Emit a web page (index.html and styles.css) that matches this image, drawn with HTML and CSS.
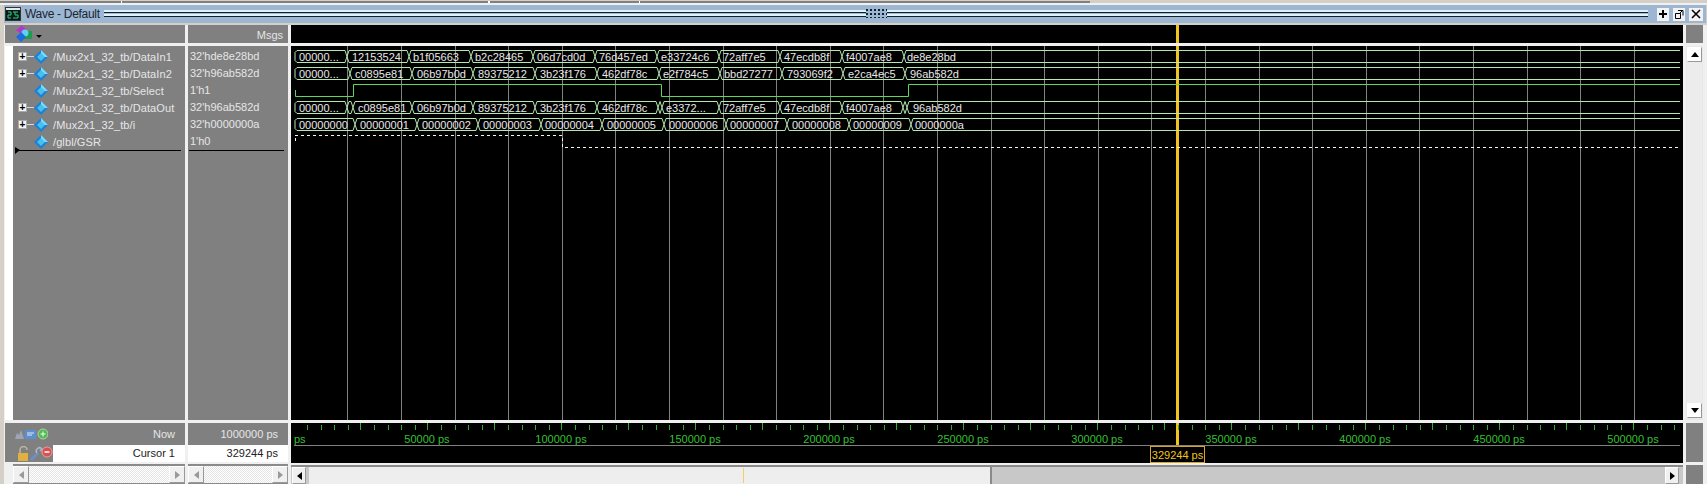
FILE: index.html
```html
<!DOCTYPE html>
<html lang="en">
<head>
    <meta name="viewport" content="width=device-width, initial-scale=1">
    <title>Wave - Default</title>
    <link rel="stylesheet" href="styles.css">
</head>
<body>
    <div class="topstrip"></div>
    <div class="window">
        <div class="titlebar">
            <svg class="appicon" width="16" height="14" viewBox="0 0 16 14">
                <rect x="0.5" y="0.5" width="15" height="13" fill="#0a1a14" stroke="#333"/>
                <rect x="1" y="1" width="14" height="2" fill="#e8e8e8"/>
                <path d="M3 5h3v3H3v3h3M8 5h5M10 5v3h3v3H8" fill="none" stroke="#2fd08a"/>
            </svg>
            <span class="wintitle">Wave - Default</span>
            <div class="grip">
                <div class="gripmark"></div>
            </div>
            <button class="winbtn">
                <svg width="10" height="10" viewBox="0 0 10 10"><path d="M5 1v8M1 5h8" stroke="#000" stroke-width="2"/></svg>
            </button>
            <button class="winbtn">
                <svg width="10" height="10" viewBox="0 0 10 10"><path d="M1.500 4.500h5v5h-5zM4 1.500h5v5M5 5l4-4" fill="none" stroke="#000"/></svg>
            </button>
            <button class="winbtn winclose">
                <svg width="10" height="10" viewBox="0 0 10 10"><path d="M1 1l8 8M9 1l-8 8" stroke="#000" stroke-width="1.600"/></svg>
            </button>
        </div>

        <div class="panes">
            <!-- signal names -->
            <div class="col names">
                <div class="head namehead">
                    <svg width="18" height="18" viewBox="0 0 18 18">
                        <path d="M7 .7l4.500 4.500-5 3-5-3z" fill="#a040c8" stroke="#d030c0"/>
                        <rect x="9" y="6" width="8" height="8" fill="#1c9c50"/>
                        <circle cx="10" cy="8" r="3.500" fill="#5fd0f0"/>
                        <path d="M6 7l5 5-5 5-5-5z" fill="#1c6ce0"/>
                    </svg>
                    <span class="arrow"></span>
                </div>
                <div class="body namebody">
                    <div class="gutter"></div>
                    <div class="list">
                        <div class="row"><span class="plus">+</span><i class="wire"></i><svg class="dia" width="14" height="14" viewBox="0 0 14 14"><use href="#diamond"/></svg><span class="sig">/Mux2x1_32_tb/DataIn1</span></div>
                        <div class="row"><span class="plus">+</span><i class="wire"></i><svg class="dia" width="14" height="14" viewBox="0 0 14 14"><use href="#diamond"/></svg><span class="sig">/Mux2x1_32_tb/DataIn2</span></div>
                        <div class="row"><span class="noplus"></span><svg class="dia" width="14" height="14" viewBox="0 0 14 14"><use href="#diamond"/></svg><span class="sig">/Mux2x1_32_tb/Select</span></div>
                        <div class="row"><span class="plus">+</span><i class="wire"></i><svg class="dia" width="14" height="14" viewBox="0 0 14 14"><use href="#diamond"/></svg><span class="sig">/Mux2x1_32_tb/DataOut</span></div>
                        <div class="row"><span class="plus">+</span><i class="wire"></i><svg class="dia" width="14" height="14" viewBox="0 0 14 14"><use href="#diamond"/></svg><span class="sig">/Mux2x1_32_tb/i</span></div>
                        <div class="row"><span class="noplus"></span><svg class="dia" width="14" height="14" viewBox="0 0 14 14"><use href="#diamond"/></svg><span class="sig">/glbl/GSR</span></div>
                        <div class="rule namerule"></div>
                    </div>
                </div>
                <div class="now nowname">
                    <span class="tools">
                        <svg width="34" height="12" viewBox="0 0 34 12">
                            <path d="M1 11l2-6 2 2 2-5 3 9z" fill="#9aa6b8"/>
                            <rect x="11" y="2" width="11" height="9" fill="#5d8fd0"/><path d="M13 5h7M13 7h5" stroke="#dfe8f4"/>
                            <circle cx="29" cy="6" r="5" fill="#58b858" stroke="#a8d8a0"/><path d="M26.500 6h5M29 3.500v5" stroke="#e8ffe8"/>
                        </svg>
                    </span>
                    <span class="nowlabel">Now</span>
                </div>
                <div class="cursorrow">
                    <span class="tools cursortools">
                        <svg width="36" height="15" viewBox="0 0 36 15">
                            <path d="M3 7V4a3.500 3.500 0 0 1 7 0" fill="none" stroke="#b8b8a0" stroke-width="1.500"/>
                            <rect x="1" y="7" width="10" height="8" fill="#e0b040"/>
                            <path d="M14 14l7-7" stroke="#6a90c8" stroke-width="2.500"/><path d="M20 7a3 3 0 0 1 5-4l-2 2" fill="none" stroke="#a8b8d0" stroke-width="1.500"/>
                            <circle cx="30" cy="6" r="5" fill="#d85050" stroke="#e8a0a0"/><path d="M27.500 6h5" stroke="#fff" stroke-width="1.500"/>
                        </svg>
                    </span>
                    <span class="cursorlabel">Cursor 1</span>
                </div>
                <div class="hbar">
                    <span class="sbtn"><i class="tri left pale"></i></span>
                    <span class="thumb"></span>
                    <span class="sbtn"><i class="tri right pale"></i></span>
                </div>
            </div>

            <!-- values -->
            <div class="col values">
                <div class="head valhead">Msgs</div>
                <div class="body valbody">
                    <div class="val">32'hde8e28bd</div>
                    <div class="val">32'h96ab582d</div>
                    <div class="val">1'h1</div>
                    <div class="val">32'h96ab582d</div>
                    <div class="val">32'h0000000a</div>
                    <div class="val">1'h0</div>
                    <div class="rule valrule"></div>
                </div>
                <div class="now nowval">1000000 ps</div>
                <div class="cursorval">329244 ps</div>
                <div class="hbar valbar">
                    <span class="sbtn"><i class="tri left pale"></i></span>
                    <span class="thumb"></span>
                    <span class="sbtn"><i class="tri right pale"></i></span>
                </div>
            </div>

            <!-- waveform -->
            <div class="col wave">
                <div class="head wavehead"><span class="cursorline"></span></div>
                <div class="body wavebody">
                    <span class="cursorline"></span>
                    <svg class="plot" width="1392" height="374" viewBox="291 46 1392 374">
                        <defs>
                            <pattern id="grid" x="347" y="46" width="268" height="374" patternUnits="userSpaceOnUse">
                                <path d="M.5 0v374M54.500 0v374M108.500 0v374M161.500 0v374M215.500 0v374" stroke="#808080"/>
                            </pattern>
                        </defs>
                        <rect x="347" y="46" width="1336" height="374" fill="url(#grid)"/>

                        <g class="bus">
                            <path d="M295 52.500l2-2H345l2 6 2-6H407l2 6 2-6H469l2 6 2-6H531l2 6 2-6H593l2 6 2-6H655l2 6 2-6H717l2 6 2-6H778l2 6 2-6H840l2 6 2-6H902l2 6 2-6H1680M295 52.500v8l2 2H345l2-6 2 6H407l2-6 2 6H469l2-6 2 6H531l2-6 2 6H593l2-6 2 6H655l2-6 2 6H717l2-6 2 6H778l2-6 2 6H840l2-6 2 6H902l2-6 2 6H1680"/>
                            <path d="M295 69.500l2-2H348l2 6 2-6H410l2 6 2-6H471l2 6 2-6H533l2 6 2-6H595l2 6 2-6H657l2 6 2-6H718l2 6 2-6H780l2 6 2-6H841l2 6 2-6H903l2 6 2-6H1680M295 69.500v8l2 2H348l2-6 2 6H410l2-6 2 6H471l2-6 2 6H533l2-6 2 6H595l2-6 2 6H657l2-6 2 6H718l2-6 2 6H780l2-6 2 6H841l2-6 2 6H903l2-6 2 6H1680"/>
                            <path d="M295 103.500l2-2H345l2 6 2-6h2l2 6 2-6H410l2 6 2-6H471l2 6 2-6H533l2 6 2-6H595l2 6 2-6H656l2 6 2-6h0l2 6 2-6H717l2 6 2-6H778l2 6 2-6H840l2 6 2-6H901l2 6 2-6h0l2 6 2-6H1680M295 103.500v8l2 2H345l2-6 2 6h2l2-6 2 6H410l2-6 2 6H471l2-6 2 6H533l2-6 2 6H595l2-6 2 6H656l2-6 2 6h0l2-6 2 6H717l2-6 2 6H778l2-6 2 6H840l2-6 2 6H901l2-6 2 6h0l2-6 2 6H1680"/>
                            <path d="M295 120.500l2-2H353l2 6 2-6H415l2 6 2-6H476l2 6 2-6H539l2 6 2-6H600l2 6 2-6H662l2 6 2-6H724l2 6 2-6H785l2 6 2-6H847l2 6 2-6H909l2 6 2-6H1680M295 120.500v8l2 2H353l2-6 2 6H415l2-6 2 6H476l2-6 2 6H539l2-6 2 6H600l2-6 2 6H662l2-6 2 6H724l2-6 2 6H785l2-6 2 6H847l2-6 2 6H909l2-6 2 6H1680"/>
                        </g>
                        <path class="logic" d="M295.500 90v6.500H353.500V84.500H661.500V96.500H908.500V84.500H1680"/>
                        <path class="dashed" d="M295 135.500H562.500V147.500H1680"/>
                        <path class="dashed" d="M295.500 138v4"/>

                        <g class="busvals">
                            <text x="299" y="61">00000...</text>
                            <text x="352" y="61">12153524</text>
                            <text x="413" y="61">b1f05663</text>
                            <text x="475" y="61">b2c28465</text>
                            <text x="537" y="61">06d7cd0d</text>
                            <text x="599" y="61">76d457ed</text>
                            <text x="661" y="61">e33724c6</text>
                            <text x="723" y="61">72aff7e5</text>
                            <text x="784" y="61">47ecdb8f</text>
                            <text x="846" y="61">f4007ae8</text>
                            <text x="907" y="61">de8e28bd</text>

                            <text x="299" y="78">00000...</text>
                            <text x="355" y="78">c0895e81</text>
                            <text x="417" y="78">06b97b0d</text>
                            <text x="478" y="78">89375212</text>
                            <text x="540" y="78">3b23f176</text>
                            <text x="602" y="78">462df78c</text>
                            <text x="663" y="78">e2f784c5</text>
                            <text x="724" y="78">bbd27277</text>
                            <text x="787" y="78">793069f2</text>
                            <text x="848" y="78">e2ca4ec5</text>
                            <text x="910" y="78">96ab582d</text>

                            <text x="299" y="112">00000...</text>
                            <text x="358" y="112">c0895e81</text>
                            <text x="417" y="112">06b97b0d</text>
                            <text x="478" y="112">89375212</text>
                            <text x="540" y="112">3b23f176</text>
                            <text x="602" y="112">462df78c</text>
                            <text x="666" y="112">e3372...</text>
                            <text x="723" y="112">72aff7e5</text>
                            <text x="784" y="112">47ecdb8f</text>
                            <text x="846" y="112">f4007ae8</text>
                            <text x="913" y="112">96ab582d</text>

                            <text x="299" y="129">00000000</text>
                            <text x="360" y="129">00000001</text>
                            <text x="422" y="129">00000002</text>
                            <text x="483" y="129">00000003</text>
                            <text x="545" y="129">00000004</text>
                            <text x="607" y="129">00000005</text>
                            <text x="669" y="129">00000006</text>
                            <text x="730" y="129">00000007</text>
                            <text x="792" y="129">00000008</text>
                            <text x="853" y="129">00000009</text>
                            <text x="915" y="129">0000000a</text>
                        </g>
                    </svg>
                </div>
                <div class="ruler">
                    <span class="cursorline"></span>
                    <svg class="plot" width="1392" height="40" viewBox="291 423 1392 40">
                        <defs>
                            <pattern id="ticks" x="294" y="423" width="67" height="8" patternUnits="userSpaceOnUse">
                                <path d="M13.500 2v5M27.500 2v5M40.500 2v5M54.500 2v5M66.500 0v7" stroke="#2fae2f"/>
                            </pattern>
                        </defs>
                        <rect x="294" y="423" width="1386" height="8" fill="url(#ticks)"/>
                        <path d="M294 445.500H1680" stroke="#808080"/>
                        <g class="timelabels">
                            <text class="firstlabel" x="294" y="443">ps</text>
                            <text x="427" y="443">50000 ps</text>
                            <text x="561" y="443">100000 ps</text>
                            <text x="695" y="443">150000 ps</text>
                            <text x="829" y="443">200000 ps</text>
                            <text x="963" y="443">250000 ps</text>
                            <text x="1097" y="443">300000 ps</text>
                            <text x="1231" y="443">350000 ps</text>
                            <text x="1365" y="443">400000 ps</text>
                            <text x="1499" y="443">450000 ps</text>
                            <text x="1633" y="443">500000 ps</text>
                        </g>
                    </svg>
                    <span class="cursortag">329244 ps</span>
                </div>
                <div class="hbar wavebar">
                    <span class="sbtn"><i class="tri left"></i></span>
                    <span class="thumb wavethumb"><i class="viewmark"></i></span>
                    <span class="track"></span>
                    <span class="sbtn"><i class="tri right"></i></span>
                </div>
            </div>

            <!-- vertical scrollbar -->
            <div class="col vscroll">
                <div class="head"></div>
                <div class="vbar">
                    <span class="sbtn vbtn"><i class="tri up"></i></span>
                    <span class="vtrack"></span>
                    <span class="sbtn vbtn"><i class="tri down"></i></span>
                </div>
                <div class="vfill"></div>
                <div class="vfill2"></div>
            </div>
        </div>
    </div>

    <svg width="0" height="0" class="defs">
        <symbol id="diamond" viewBox="0 0 14 14">
            <path d="M7 0l7 7-7 7-7-7z" fill="#1a80d8"/>
            <path d="M7 0l7 7H7z" fill="#7fdcf4"/>
            <path d="M3 7l4-4 4 4-4 4z" fill="#46c0ee"/>
        </symbol>
    </svg>
</body>
</html>
```

FILE: styles.css
```css
* {
    box-sizing: border-box;
}

html, body {
    margin: 0;
    height: 484px;
    overflow: hidden;
}

body {
    background: #d4d0c8;
    font-family: "Liberation Sans", sans-serif;
    font-size: 11px;
    width: 1707px;
}

.defs {
    position: absolute;
}

/* tabs of the window behind, only their lower edge shows */
.topstrip {
    height: 5px;
    border-top: 1px solid #d4d0c8;
    border-bottom: 2px solid #f0f0f0;
    background: linear-gradient(90deg, #808080 0 121px, #fff 121px 122px, #808080 122px 488px, #fff 488px 490px, #808080 490px 639px, #fff 639px 640px, #808080 640px 1090px, #d4d0c8 1090px);
}

.window {
    padding-left: 4px;
    background: #d4d0c8;
}

.titlebar {
    display: flex;
    align-items: center;
    height: 18px;
    padding-left: 1px;
    padding-right: 3px;
    background: #9db7d3;
    margin-right: 1px;
}

.appicon {
    margin-right: 4px;
}

.wintitle {
    color: #1c2430;
    font-size: 12px;
    letter-spacing: -0.3px;
    width: 79px;
    white-space: nowrap;
}

.grip {
    flex: 1;
    height: 7px;
    margin-right: 5px;
    margin-top: -1px;
    background: linear-gradient(#dff0f8 0, #dff0f8 2px, #10202e 2px, #10202e 3px, #9db7d3 3px, #9db7d3 4px, #dff0f8 4px, #dff0f8 6px, #10202e 6px);
    display: flex;
    justify-content: center;
}

.gripmark {
    width: 21px;
    height: 9px;
    margin-top: -1px;
    background-color: #9db7d3;
    background-image: radial-gradient(circle at 1px 1px, #10202e 1px, transparent 1px);
    background-size: 4px 4px;
}

.winbtn {
    width: 12px;
    height: 13px;
    padding: 0;
    margin-left: 4px;
    border: none;
    background: #f2f2f2;
    display: flex;
    align-items: center;
    justify-content: center;
}

.winclose {
    width: 14px;
}

.panes {
    display: grid;
    grid-template-columns: 180px 100px 1392px 21px;
    column-gap: 3px;
    margin-top: 2px;
    padding-left: 1px;
    height: 459px;
    background: #f0f0f0;
}

.col {
    display: flex;
    flex-direction: column;
    min-width: 0;
}

.head {
    height: 18px;
    background: #808080;
    flex: none;
}

.namehead {
    display: flex;
    align-items: center;
    padding-left: 10px;
}

.arrow {
    width: 0;
    height: 0;
    margin: 5px 0 0 3px;
    border: 3px solid transparent;
    border-top: 3px solid #000;
    border-bottom: 0;
}

.valhead {
    color: #e4e4e4;
    text-align: right;
    padding-right: 5px;
    line-height: 20px;
}

.body {
    height: 374px;
    margin-top: 3px;
    background: #808080;
    flex: none;
}

.namebody {
    display: flex;
}

.gutter {
    width: 8px;
    background: #fff;
}

.list {
    flex: 1;
    padding: 2px 4px 0 0;
}

.row {
    display: flex;
    align-items: center;
    height: 17px;
    color: #e6e6e6;
    letter-spacing: 0.1px;
    white-space: nowrap;
}

.plus {
    width: 9px;
    height: 9px;
    margin-left: 5px;
    background: #f4f4f4;
    border: 1px solid #aaa;
    color: #000;
    font-size: 10px;
    font-weight: bold;
    line-height: 7px;
    text-align: center;
}

.noplus {
    width: 21px;
}

.wire {
    width: 7px;
    height: 1px;
    background: #d8d8d8;
}

.dia {
    margin-right: 5px;
}

.rule {
    height: 1px;
    background: #000;
}

.namerule {
    position: relative;
    margin: 0 0 0 3px;
}

/* little marker at the start of the list */
.namerule::before {
    content: "";
    position: absolute;
    left: -1px;
    top: -3px;
    border-left: 5px solid #000;
    border-top: 3px solid transparent;
    border-bottom: 4px solid transparent;
}

.valbody {
    padding-top: 2px;
}

.val {
    height: 17px;
    line-height: 17px;
    padding-left: 2px;
    color: #e6e6e6;
    white-space: nowrap;
}

.valrule {
    margin: 0 4px 0 1px;
}

.wave .head,
.wave .body,
.ruler {
    background: #000;
}

.wavehead,
.wavebody,
.ruler {
    position: relative;
    overflow: hidden;
}

.cursorline {
    position: absolute;
    left: 885px;
    top: 0;
    bottom: 0;
    width: 3px;
    background: #f2c31c;
}

.plot {
    position: absolute;
    left: 0;
    top: 0;
}

.bus path,
.logic,
.dashed {
    fill: none;
    stroke-width: 1;
}

.bus path {
    stroke: #b5e8b0;
}

.logic {
    stroke: #5ed85a;
}

.dashed {
    stroke: #f2f2f2;
    stroke-dasharray: 3 3;
}

.busvals text {
    fill: #e8e8e8;
    font-size: 11px;
}

.timelabels text {
    fill: #33c033;
    font-size: 11px;
    text-anchor: middle;
}

.timelabels .firstlabel {
    text-anchor: start;
}

.now {
    height: 22px;
    margin-top: 3px;
    background: #808080;
    color: #e6e6e6;
    flex: none;
    display: flex;
    align-items: center;
}

.nowname {
    justify-content: space-between;
    padding: 0 10px 0 9px;
}

.nowval {
    justify-content: flex-end;
    padding-right: 10px;
}

.tools {
    display: flex;
}

.cursorrow {
    height: 17px;
    display: flex;
    background: #808080;
}

.cursortools {
    width: 48px;
    padding-left: 12px;
    padding-top: 1px;
}

.cursorlabel {
    flex: 1;
    background: #fff;
    color: #222;
    text-align: right;
    padding-right: 10px;
    line-height: 17px;
}

.cursorval {
    height: 17px;
    line-height: 17px;
    background: #fff;
    color: #222;
    text-align: right;
    padding-right: 10px;
}

.ruler {
    height: 40px;
    margin-top: 3px;
    flex: none;
}

.ruler .cursorline {
    bottom: 17px;
}

.cursortag {
    position: absolute;
    left: 859px;
    top: 23px;
    width: 55px;
    height: 17px;
    border: 1px solid #d8a820;
    color: #f2c31c;
    text-align: center;
    line-height: 16px;
    white-space: nowrap;
}

.hbar {
    display: flex;
    height: 20px;
    margin-top: 2px;
    margin-left: 8px;
    border-top: 2px solid #8a8a8a;
    border-bottom: 1px solid #8a8a8a;
    align-items: stretch;
    flex: none;
}

.valbar {
    margin-left: 0;
}

.wavebar {
    margin-left: 0;
    padding-right: 3px;
    background: #c8c8c8;
}

.sbtn {
    width: 16px;
    flex: none;
    background: #f0f0f0;
    border: 1px solid #fff;
    border-right-color: #999;
    border-bottom-color: #999;
    display: flex;
    align-items: center;
    justify-content: center;
}

.thumb {
    flex: 1;
    background: repeating-conic-gradient(#fff 0 25%, #e4e4e4 0 50%) 0 0 / 2px 2px;
}

.wavebar .sbtn {
    width: 14px;
    margin: 0 1px;
}

.wavethumb {
    position: relative;
    flex: none;
    width: 683px;
    margin-left: 2px;
    border-right: 2px solid #8a8a8a;
    background: #eee;
}

.viewmark {
    position: absolute;
    left: 434px;
    top: 1px;
    bottom: 1px;
    width: 1px;
    background: #f0d060;
}

.track {
    flex: 1;
    background: #c8c8c8;
}

.tri {
    width: 0;
    height: 0;
    border: 4px solid transparent;
}

.tri.left {
    border-left: 0;
    border-right: 5px solid #000;
}

.tri.right {
    border-right: 0;
    border-left: 5px solid #000;
}

.tri.left.pale {
    border-right-color: #999;
}

.tri.right.pale {
    border-left-color: #999;
}

.tri.up {
    border-top: 0;
    border-bottom: 5px solid #000;
}

.tri.down {
    border-bottom: 0;
    border-top: 5px solid #000;
}

.vscroll .head {
    width: 17px;
}

.vbar {
    width: 17px;
    height: 374px;
    margin-top: 3px;
    flex: none;
    display: flex;
    flex-direction: column;
    padding: 1px 1px 2px;
    background: #e8e8e8;
}

.vbtn {
    width: 15px;
    height: 15px;
    background: #fff;
}

.vtrack {
    flex: 1;
    background: #ececec;
}

.vfill {
    width: 17px;
    height: 39px;
    margin-top: 3px;
    background: #808080;
    flex: none;
}

.vfill2 {
    width: 17px;
    height: 19px;
    margin-top: 3px;
    background: #808080;
    flex: none;
}
```
